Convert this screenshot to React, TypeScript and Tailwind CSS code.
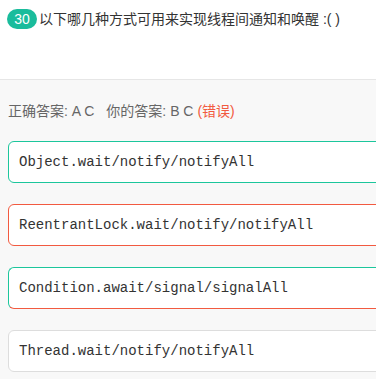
const options = [
  {
    key: "A",
    text: "Object.wait/notify/notifyAll",
    border: "border-[#1cc69c]",
  },
  {
    key: "B",
    text: "ReentrantLock.wait/notify/notifyAll",
    border: "border-[#f25a40]",
  },
  {
    key: "C",
    text: "Condition.await/signal/signalAll",
    border: "border-t-[#1cc69c] border-l-[#1cc69c] border-b-[#f25a40] border-r-[#f25a40]",
  },
  {
    key: "D",
    text: "Thread.wait/notify/notifyAll",
    border: "border-[#dddddd]",
  },
];

export default function App() {
  return (
    <div className="h-[379px] w-[376px] overflow-hidden bg-[#f8f8f8] font-['Liberation_Sans','Noto_Sans_CJK_SC',sans-serif]">
      <header className="h-[80px] border-b border-[#e6e6e6] bg-white px-[7px] pt-[9px]">
        <div className="flex items-center gap-[2px]">
          <span className="flex h-[20px] w-[30px] items-center justify-center rounded-full bg-[#1abc9c] text-[14px] text-white">
            30
          </span>
          <h1 className="text-[14px] leading-5 text-[#333]">
            以下哪几种方式可用来实现线程间通知和唤醒 :( )
          </h1>
        </div>
      </header>

      <section className="px-2">
        <p className="pt-[21px] text-[14px] leading-5 text-[#666]">
          <span className="mr-3">正确答案: A C</span>
          <span>你的答案: B C </span>
          <span className="text-[#f25a40]">(错误)</span>
        </p>

        <ul className="mt-5 flex flex-col gap-[21px]">
          {options.map((opt) => (
            <li
              key={opt.key}
              className={`flex h-[42px] w-[420px] items-center rounded-md border bg-white pl-[10px] font-['Liberation_Mono',monospace] text-[14px] text-[#333] ${opt.border}`}
            >
              {opt.text}
            </li>
          ))}
        </ul>
      </section>
    </div>
  );
}
